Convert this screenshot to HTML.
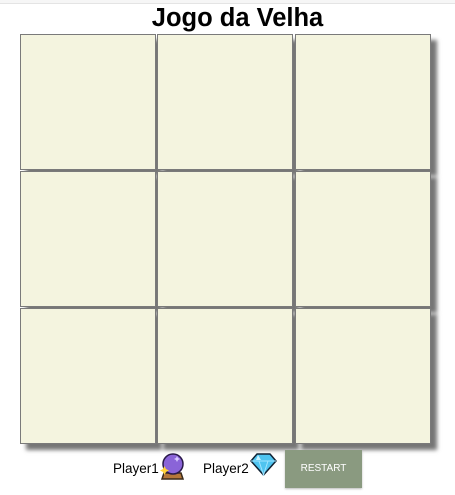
<!DOCTYPE html>
<html><head><style>
html,body{margin:0;padding:0;background:#fff;width:455px;height:495px;overflow:hidden;font-family:"Liberation Sans",Arial,sans-serif;}
.top{position:absolute;left:0;top:0;width:455px;height:3px;border-bottom:1px solid #e4e4e4;background:#f6f6f6}
h1{position:absolute;left:0;width:475px;top:4px;margin:0;text-align:center;font-size:25.5px;font-weight:bold;color:#000;line-height:28px}
.c{position:absolute;width:134px;height:134px;background:#f4f4df;border:1px solid #7a7a7a;box-shadow:6px 6px 4px #767676}
.t{position:absolute;top:461px;font-size:13.5px;color:#000}
.btn{position:absolute;left:285px;top:450px;width:77px;height:38px;background:#8a9a80;color:#fff;font-size:10px;text-align:center;line-height:38px;box-shadow:0 1px 2px #bbb}
</style></head><body>
<div class="top"></div>
<h1>Jogo da Velha</h1>
<div class="c" style="left:20px;top:34px"></div>
<div class="c" style="left:157px;top:34px"></div>
<div class="c" style="left:295px;top:34px"></div>
<div class="c" style="left:20px;top:171px"></div>
<div class="c" style="left:157px;top:171px"></div>
<div class="c" style="left:295px;top:171px"></div>
<div class="c" style="left:20px;top:308px"></div>
<div class="c" style="left:157px;top:308px"></div>
<div class="c" style="left:295px;top:308px"></div>
<div class="t" style="left:113px">Player1</div>
<svg style="position:absolute;left:159px;top:451px" width="27" height="30" viewBox="0 0 27 30">
<path d="M5 22 L22 22 L24 28 L3 28 Z" fill="#b5773a" stroke="#3a2a1a" stroke-width="1.5"/>
<circle cx="14" cy="13" r="10" fill="#8a64d8" stroke="#2a1a4a" stroke-width="1.5"/>
<path d="M17 7 l1 -2 l1 2 l2 1 l-2 1 l-1 2 l-1 -2 l-2 -1z" fill="#d8c8ff"/>
<path d="M4 18 l1.5 -3 l1.5 3 l3 1.5 l-3 1.5 l-1.5 3 l-1.5 -3 l-3 -1.5z" fill="#ffd23a"/>
</svg>
<div class="t" style="left:203px">Player2</div>
<svg style="position:absolute;left:250px;top:452px" width="27" height="24" viewBox="0 0 27 24">
<path d="M7 2 L20 2 L26 9 L13.5 23 L1 9 Z" fill="#4fc4f0" stroke="#123" stroke-width="1.5" stroke-linejoin="round"/>
<path d="M1 9 L26 9 M9 9 L13.5 23 L18 9" stroke="#9fe4ff" stroke-width="1" fill="none"/>
<path d="M8 3 L11 8 L6 8 Z" fill="#c8f2ff"/>
</svg>
<div class="btn">RESTART</div>
</body></html>
